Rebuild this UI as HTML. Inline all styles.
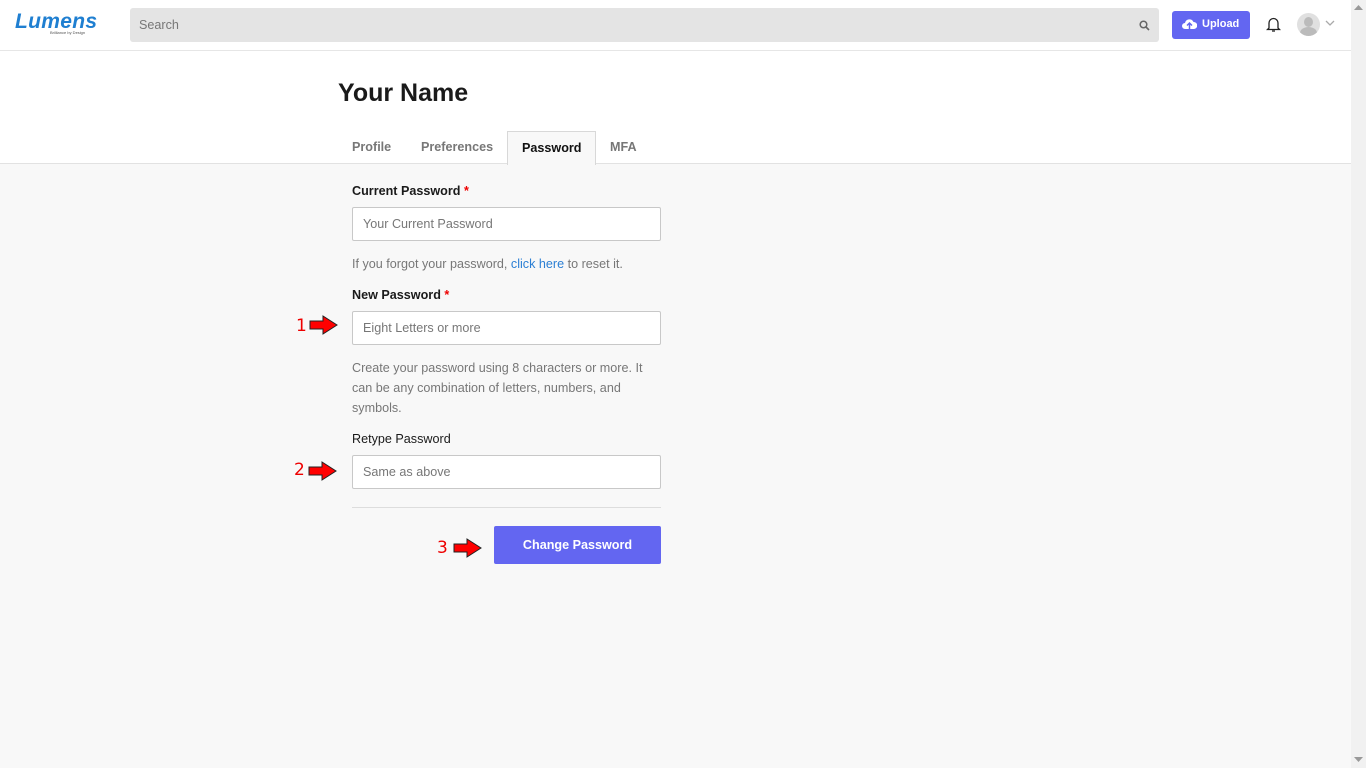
<!DOCTYPE html>
<html><head><style>
*{box-sizing:border-box}
body{margin:0;width:1366px;height:768px;overflow:hidden;background:#f8f8f8;font-family:"Liberation Sans",sans-serif;position:relative}
.top{position:absolute;left:0;top:0;width:1351px;height:164px;background:#fff;border-bottom:1px solid #e2e2e2}
.hdr{position:absolute;left:0;top:0;width:1351px;height:51px;border-bottom:1px solid #e6e6e6}
.sb{position:absolute;right:0;top:0;width:15px;height:768px;background:#f1f1f1}
.abs{position:absolute}
.lbl{position:absolute;left:352px;font-size:12.6px;color:#1a1a1a}
.inp{position:absolute;left:352px;width:309px;height:34px;border:1px solid #c8c8c8;border-radius:2px;background:#fff;font-size:12.6px;color:#777;padding:9px 10px}
.help{position:absolute;left:352px;font-size:12.6px;color:#777;line-height:20px}
.num{position:absolute;color:#e00;font-size:17px;font-family:"DejaVu Sans",sans-serif}
</style></head><body>
<div class="top"></div>
<div class="hdr">
 <div class="abs" style="left:15px;top:10px;font:italic 900 21px 'Liberation Sans';color:#1f7fd1;letter-spacing:0.3px">Lumens</div>
 <div class="abs" style="left:50px;top:30px;font-size:4px;color:#555">Brilliance by Design</div>
 <div class="abs" style="left:130px;top:8px;width:1029px;height:34px;background:#e4e4e4;border-radius:3px;font-size:12.6px;color:#777;padding:10px 9px">Search</div>
 <svg class="abs" style="left:1139px;top:20px" width="11" height="11"><circle cx="4.5" cy="4.5" r="3.3" stroke="#666" stroke-width="1.5" fill="none"/><line x1="7" y1="7" x2="10" y2="10" stroke="#666" stroke-width="1.6"/></svg>
 <div class="abs" style="left:1172px;top:11px;width:78px;height:28px;background:#6366f1;border-radius:3px;color:#fff;font-size:11px;font-weight:bold;padding:7px 0 0 30px">Upload</div>
 <svg class="abs" style="left:1182px;top:18px" width="15" height="13"><path d="M3 11a3 3 0 0 1 0-6 4.5 4.5 0 0 1 8.5-1 3.5 3.5 0 0 1 0.5 7z" fill="#fff"/><path d="M7.5 5v6M5 7.5l2.5-2.5 2.5 2.5" stroke="#6366f1" stroke-width="1.5" fill="none"/></svg>
 <svg class="abs" style="left:1266px;top:16px" width="15" height="17"><path d="M3 12V7a4.5 4.5 0 0 1 9 0v5l1.5 1.5h-12z" stroke="#222" stroke-width="1.3" fill="none"/><path d="M6 15h3" stroke="#222" stroke-width="1.3"/></svg>
 <div class="abs" style="left:1297px;top:13px;width:23px;height:23px;border-radius:50%;background:#e0e0e0;overflow:hidden"><div class="abs" style="left:7px;top:4px;width:9px;height:10px;border-radius:50%;background:#bbb"></div><div class="abs" style="left:3px;top:14px;width:17px;height:12px;border-radius:50%;background:#bbb"></div></div>
 <svg class="abs" style="left:1325px;top:20px" width="10" height="7"><path d="M1 1l4 4 4-4" stroke="#aaa" stroke-width="1.3" fill="none"/></svg>
</div>
<div class="abs" style="left:338px;top:79px;font-size:25px;font-weight:bold;color:#1a1a1a">Your Name</div>
<div class="abs" style="left:352px;top:140px;font-size:12.6px;font-weight:bold;color:#777">Profile</div>
<div class="abs" style="left:421px;top:140px;font-size:12.6px;font-weight:bold;color:#777">Preferences</div>
<div class="abs" style="left:507px;top:131px;width:89px;height:34px;background:#f8f8f8;border:1px solid #d8d8d8;border-bottom:none;font-size:12.6px;font-weight:bold;color:#111;padding:9px 0 0 14px">Password</div>
<div class="abs" style="left:610px;top:140px;font-size:12.6px;font-weight:bold;color:#777">MFA</div>

<div class="lbl" style="top:184px;font-weight:bold">Current Password <span style="color:#e00">*</span></div>
<div class="inp" style="top:207px">Your Current Password</div>
<div class="help" style="top:254px">If you forgot your password, <span style="color:#2b7fd4">click here</span> to reset it.</div>
<div class="lbl" style="top:288px;font-weight:bold">New Password <span style="color:#e00">*</span></div>
<div class="inp" style="top:311px">Eight Letters or more</div>
<div class="help" style="top:358px;width:300px">Create your password using 8 characters or more. It can be any combination of letters, numbers, and symbols.</div>
<div class="lbl" style="top:432px">Retype Password</div>
<div class="inp" style="top:455px">Same as above</div>
<div class="abs" style="left:352px;top:507px;width:309px;height:1px;background:#ddd"></div>
<div class="abs" style="left:494px;top:526px;width:167px;height:38px;background:#6366f1;border-radius:2px;color:#fff;font-size:12.6px;font-weight:bold;text-align:center;line-height:38px">Change Password</div>

<div class="num" style="left:296px;top:316px">1</div>
<svg class="abs" style="left:309px;top:315px" width="30" height="20"><path d="M1 6h13V1l14 9-14 9v-5H1z" fill="#f00" stroke="#222" stroke-width="1"/></svg>
<div class="num" style="left:294px;top:460px">2</div>
<svg class="abs" style="left:308px;top:461px" width="30" height="20"><path d="M1 6h13V1l14 9-14 9v-5H1z" fill="#f00" stroke="#222" stroke-width="1"/></svg>
<div class="num" style="left:437px;top:538px">3</div>
<svg class="abs" style="left:453px;top:538px" width="30" height="20"><path d="M1 6h13V1l14 9-14 9v-5H1z" fill="#f00" stroke="#222" stroke-width="1"/></svg>

<div class="sb"><svg class="abs" style="left:3px;top:4px" width="9" height="6"><path d="M0 6l4.5-5 4.5 5z" fill="#999"/></svg><svg class="abs" style="left:3px;top:757px" width="9" height="6"><path d="M0 0l4.5 5 4.5-5z" fill="#999"/></svg></div>
</body></html>
